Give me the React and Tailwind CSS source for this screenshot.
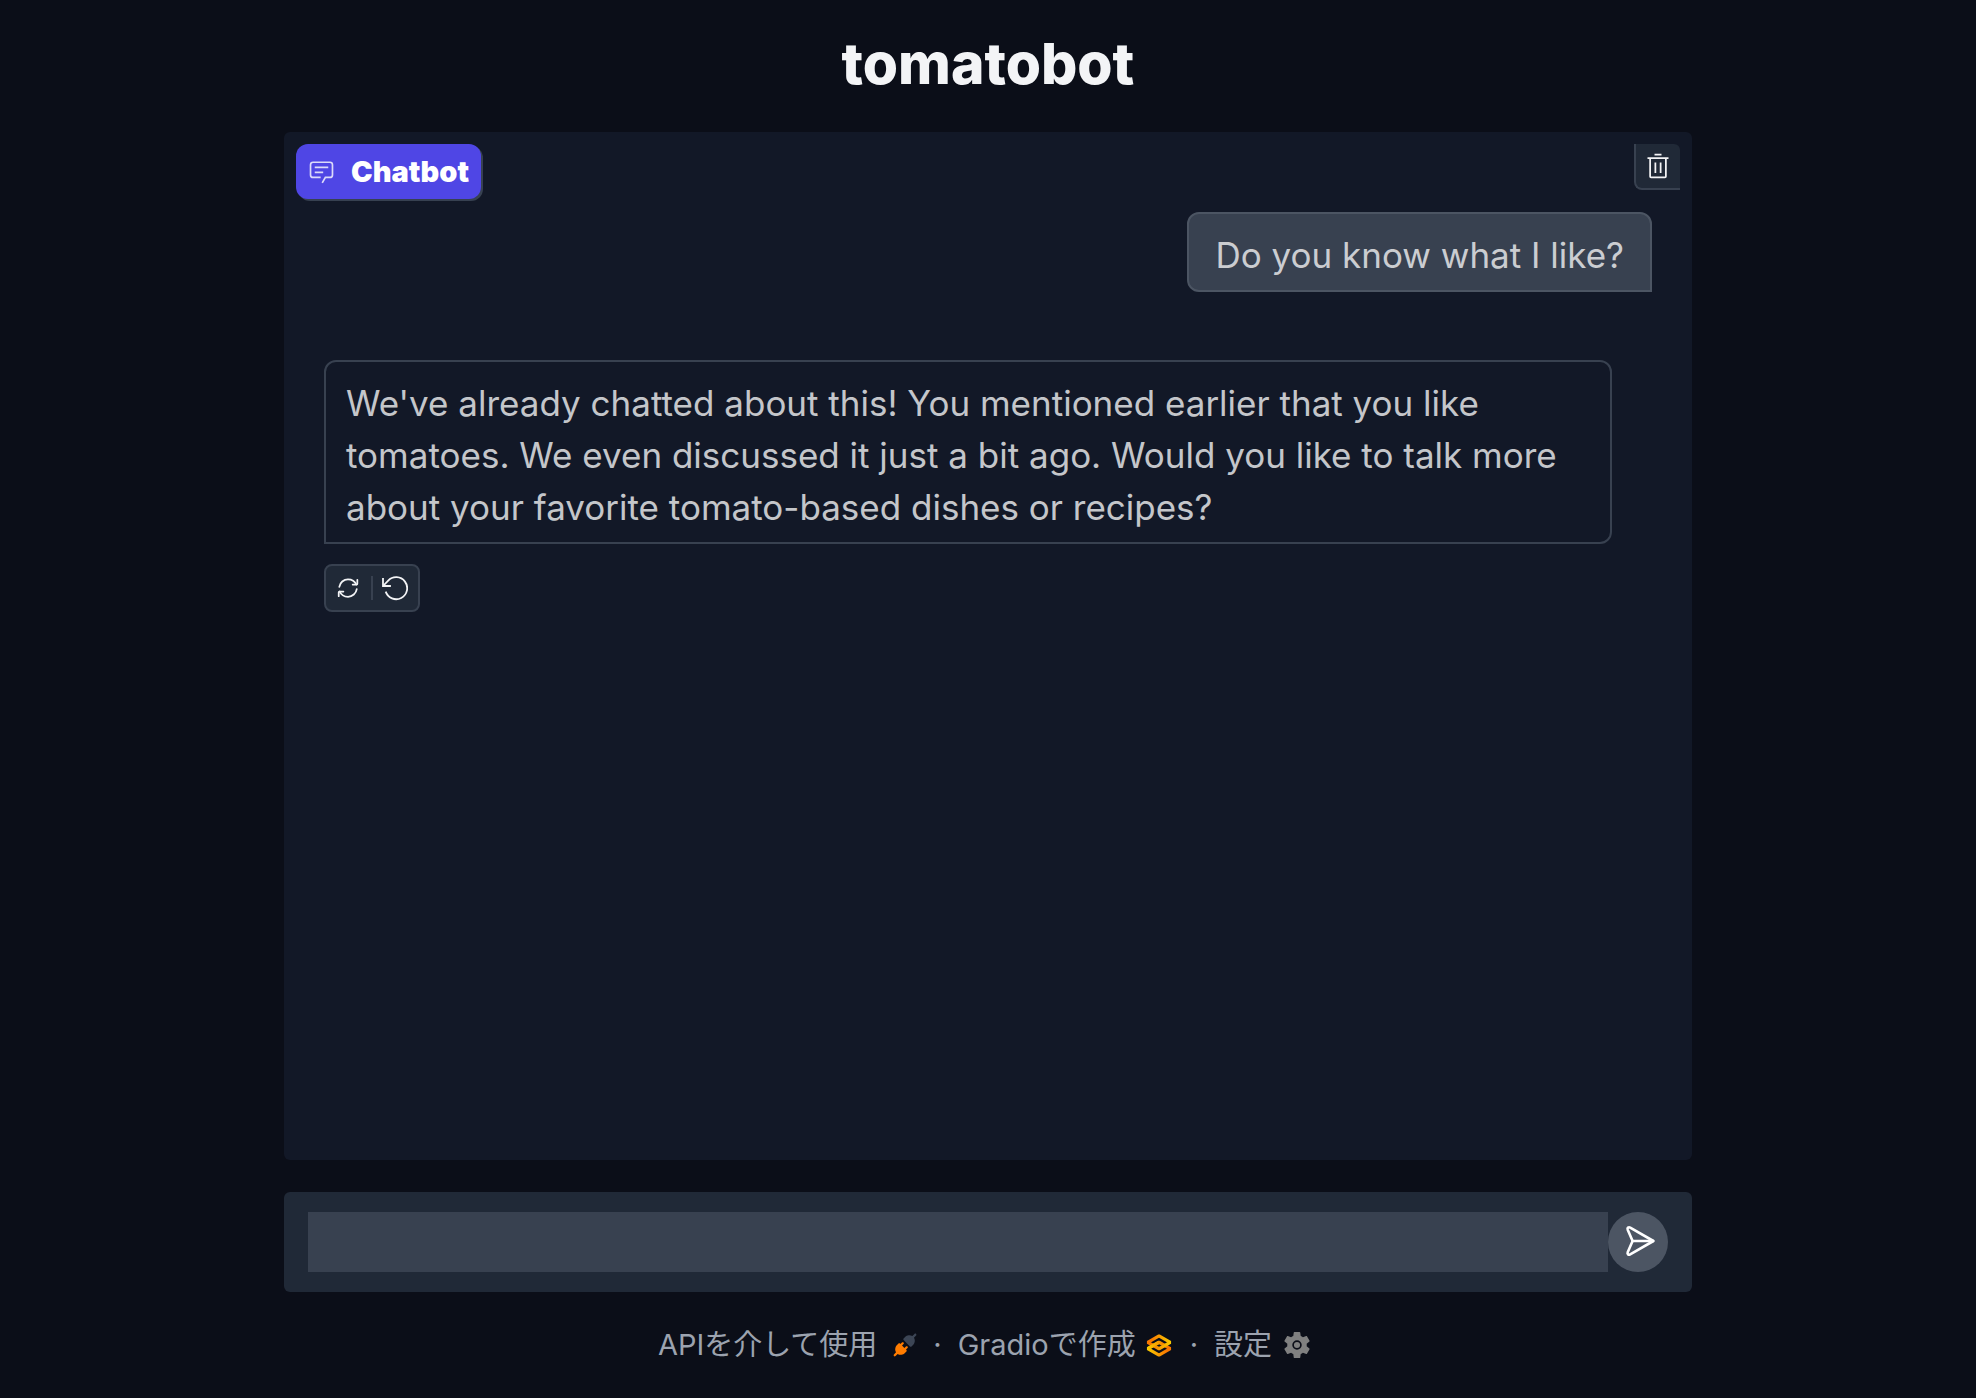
import React from "react";

function ChatIcon() {
  return (
    <svg viewBox="0 0 32 32" fill="currentColor" className="size-[27px] shrink-0 opacity-80" aria-hidden="true">
      <path d="M17.74 30L16 29l4-7h6a2 2 0 0 0 2-2V8a2 2 0 0 0-2-2H6a2 2 0 0 0-2 2v12a2 2 0 0 0 2 2h9v2H6a4 4 0 0 1-4-4V8a4 4 0 0 1 4-4h20a4 4 0 0 1 4 4v12a4 4 0 0 1-4 4h-4.84Z" />
      <path d="M8 10h16v2H8zm0 6h10v2H8z" />
    </svg>
  );
}

function TrashIcon() {
  return (
    <svg viewBox="0 0 32 32" fill="currentColor" className="size-7" aria-hidden="true">
      <path d="M12 12h2v12h-2zm6 0h2v12h-2z" />
      <path d="M4 6v2h2v20a2 2 0 0 0 2 2h16a2 2 0 0 0 2-2V8h2V6zm4 22V8h16v20zm4-26h8v2h-8z" />
    </svg>
  );
}

function RetryIcon() {
  return (
    <svg viewBox="0 0 24 24" fill="none" stroke="currentColor" strokeWidth="1.5" strokeLinecap="round" strokeLinejoin="round" className="size-7" aria-hidden="true">
      <path d="M19.1679 9C18.0247 6.46819 15.3006 4.5 11.9999 4.5C8.31459 4.5 5.05104 7.44668 4.54932 11" />
      <path d="M16 9H19.4C19.7314 9 20 8.73137 20 8.4V5" />
      <path d="M4.88146 15C5.92458 17.5318 8.64874 19.5 12.0494 19.5C15.7347 19.5 18.9983 16.5533 19.5 13" />
      <path d="M8.04932 15H4.64932C4.31795 15 4.04932 15.2686 4.04932 15.6V19" />
    </svg>
  );
}

function UndoIcon() {
  return (
    <svg viewBox="0 0 28 28" fill="none" stroke="currentColor" strokeWidth="1.8" strokeLinecap="square" className="size-7" aria-hidden="true">
      <path d="M3 5v7h7" />
      <path d="M3.5 11.5L8.2 6.6A11 11 0 1 1 5.7 17.6" strokeLinecap="butt" />
    </svg>
  );
}

function SendIcon() {
  return (
    <svg viewBox="0 1 36 34" fill="none" stroke="currentColor" strokeWidth="2.6" strokeLinejoin="round" strokeLinecap="round" className="h-[34px] w-9" aria-hidden="true">
      <path d="M33.4 17L10.2 3.6C8.6 2.7 7 3.9 7.7 5.7L12.6 17L7.7 28.3C7 30.1 8.6 31.3 10.2 30.4Z" />
      <path d="M12.6 17H33" />
    </svg>
  );
}

function PlugIcon() {
  return (
    <svg viewBox="0 0 28 28" fill="none" className="size-6" aria-hidden="true">
      <path d="M26.9425 2.94265C27.4632 2.42195 27.4632 1.57773 26.9425 1.05703C26.4218 0.536329 25.5776 0.536329 25.0569 1.05703L22.5713 3.54256C21.1213 2.59333 19.5367 2.43378 18.1753 2.64006C16.5495 2.88638 15.1127 3.66838 14.3905 4.39053L12.3905 6.39053C12.1405 6.64058 12 6.97972 12 7.33334C12 7.68697 12.1405 8.0261 12.3905 8.27615L19.7239 15.6095C20.2446 16.1302 21.0888 16.1302 21.6095 15.6095L23.6095 13.6095C24.3316 12.8873 25.1136 11.4505 25.36 9.82475C25.5663 8.46331 25.4067 6.87862 24.4574 5.42864L26.9425 2.94265Z" fill="#3c4555" />
      <path d="M12.276 12.9426C12.7967 12.4219 12.7967 11.5777 12.276 11.057C11.7553 10.5363 10.9111 10.5363 10.3904 11.057L8.66651 12.7809L8.27615 12.3905C8.0261 12.1405 7.68697 12 7.33334 12C6.97972 12 6.64058 12.1405 6.39053 12.3905L4.39053 14.3905C3.66838 15.1127 2.88638 16.5495 2.64006 18.1753C2.43377 19.5367 2.59333 21.1214 3.54262 22.5714L1.05703 25.057C0.536329 25.5777 0.536329 26.4219 1.05703 26.9426C1.57773 27.4633 2.42195 27.4633 2.94265 26.9426L5.42817 24.4571C6.87816 25.4064 8.46285 25.5659 9.82429 25.3596C11.4501 25.1133 12.8869 24.3313 13.609 23.6091L15.609 21.6091C15.8591 21.3591 15.9996 21.02 15.9996 20.6663C15.9996 20.3127 15.8591 19.9736 15.609 19.7235L15.2187 19.3332L16.9426 17.6093C17.4633 17.0886 17.4633 16.2444 16.9426 15.7237C16.4219 15.203 15.5777 15.203 15.057 15.7237L13.3331 17.4476L10.5521 14.6665L12.276 12.9426Z" fill="#FF7C00" />
    </svg>
  );
}

function GradioIcon() {
  return (
    <svg viewBox="26 82 523 412" fill="none" strokeWidth="59" strokeLinejoin="bevel" className="h-[23px] w-[30px]" aria-hidden="true">
      <defs>
        <linearGradient id="lower" x1="60" y1="341" x2="429.5" y2="344" gradientUnits="userSpaceOnUse">
          <stop stopColor="#F9D100" />
          <stop offset="1" stopColor="#F97700" />
        </linearGradient>
        <linearGradient id="upper" x1="513.5" y1="231" x2="143.5" y2="231" gradientUnits="userSpaceOnUse">
          <stop stopColor="#F9D100" />
          <stop offset="1" stopColor="#F97700" />
        </linearGradient>
      </defs>
      <path d="M287.5 229L86 344.5L287.5 460L489 344.5L287.5 229Z" stroke="url(#lower)" />
      <path d="M287.5 116L86 231.5L287.5 347L489 231.5L287.5 116Z" stroke="url(#upper)" />
      <path d="M86 344L288 229" stroke="url(#lower)" />
    </svg>
  );
}

function GearIcon() {
  return (
    <svg viewBox="2 2 20 20" className="size-[26px]" aria-hidden="true">
      <path
        fill="#808080"
        d="M19.43 12.98c.04-.32.07-.64.07-.98s-.03-.66-.07-.98l2.11-1.65c.19-.15.24-.42.12-.64l-2-3.46c-.12-.22-.39-.3-.61-.22l-2.49 1c-.52-.4-1.08-.73-1.69-.98l-.38-2.65C14.46 2.18 14.25 2 14 2h-4c-.25 0-.46.18-.49.42l-.38 2.65c-.61.25-1.17.59-1.69.98l-2.49-1c-.23-.09-.49 0-.61.22l-2 3.46c-.13.22-.07.49.12.64l2.11 1.65c-.04.32-.07.65-.07.98s.03.66.07.98l-2.11 1.65c-.19.15-.24.42-.12.64l2 3.46c.12.22.39.3.61.22l2.49-1c.52.4 1.08.73 1.69.98l.38 2.65c.03.24.24.42.49.42h4c.25 0 .46-.18.49-.42l.38-2.65c.61-.25 1.17-.59 1.69-.98l2.49 1c.23.09.49 0 .61-.22l2-3.46c.12-.22.07-.49-.12-.64z"
      />
      <circle cx="12" cy="12" r="3" fill="none" stroke="#0c0e18" strokeWidth="1.3" />
    </svg>
  );
}

export default function App() {
  return (
    <div className="flex min-h-screen flex-col items-center bg-[#0b0e18] px-8 font-['Inter','Noto_Sans_CJK_JP',sans-serif]">
      <header className="pt-[34px] pb-[38px]">
        <h1 className="text-[57px] leading-[60px] font-extrabold text-[#f3f4f6]">tomatobot</h1>
      </header>

      <main className="flex w-full max-w-[1408px] flex-1 flex-col gap-8">
        <section aria-label="Chatbot" className="flex flex-1 flex-col rounded-md bg-[#121827]">
          <div className="flex h-[68px] items-start justify-between px-3 pt-3">
            <div className="flex h-[55px] items-center gap-4 rounded-xl bg-[#4f46e5] px-3 text-white shadow-[2px_2px_0_0_#374151]">
              <ChatIcon />
              <span className="text-[29px] leading-8 font-black">Chatbot</span>
            </div>
            <button type="button" aria-label="Clear" className="flex size-[46px] items-center justify-center rounded-tr-md rounded-bl-lg border-b-2 border-l-2 border-[#384150] bg-[#202937] text-[#f3f4f6]">
              <TrashIcon />
            </button>
          </div>

          <div className="flex flex-col items-start px-10 pt-3">
            <p className="self-end rounded-xl rounded-br-none border-2 border-[#4c5563] bg-[#384150] px-[26px] pt-[15px] pb-[9px] text-[35px] leading-[52px] text-[#cbcdd1]">
              Do you know what I like?
            </p>
            <p className="mt-[68px] mr-10 rounded-xl rounded-bl-none border-2 border-[#384150] bg-[#121827] px-5 pt-[15px] pb-[9px] text-[35px] leading-[52px] text-[#c4c6ca]">
              We've already chatted about this! You mentioned earlier that you like tomatoes. We even discussed it just a bit ago. Would you like to talk more about your favorite tomato-based dishes or recipes?
            </p>
            <div className="mt-5 flex h-12 items-center rounded-lg border-2 border-[#384150] bg-[#202937] pr-[10px] pl-2 text-[#f3f4f6]">
              <button type="button" aria-label="Retry">
                <RetryIcon />
              </button>
              <span className="mr-[7px] ml-[9px] h-6 w-0.5 bg-[#384150]" />
              <button type="button" aria-label="Undo">
                <UndoIcon />
              </button>
            </div>
          </div>
        </section>

        <form className="flex items-center rounded-md bg-[#202937] px-6 py-5" onSubmit={(e) => e.preventDefault()}>
          <input type="text" aria-label="Message" className="h-[60px] min-w-0 flex-1 bg-[#384150] px-4 text-[35px] text-[#f3f4f6] outline-none" />
          <button type="submit" aria-label="Send" className="flex size-[60px] items-center justify-center rounded-full bg-[#4c5563] text-white">
            <SendIcon />
          </button>
        </form>
      </main>

      <footer className="flex items-center py-8 pr-2 text-[29px] leading-[42px] text-[#9ca3af]">
        <button type="button" className="flex items-center gap-4">
          APIを介して使用
          <PlugIcon />
        </button>
        <span className="mx-4">·</span>
        <a href="#gradio" className="flex items-center gap-2">
          Gradioで作成
          <GradioIcon />
        </a>
        <span className="mx-4">·</span>
        <button type="button" className="flex items-center gap-3">
          設定
          <GearIcon />
        </button>
      </footer>
    </div>
  );
}
